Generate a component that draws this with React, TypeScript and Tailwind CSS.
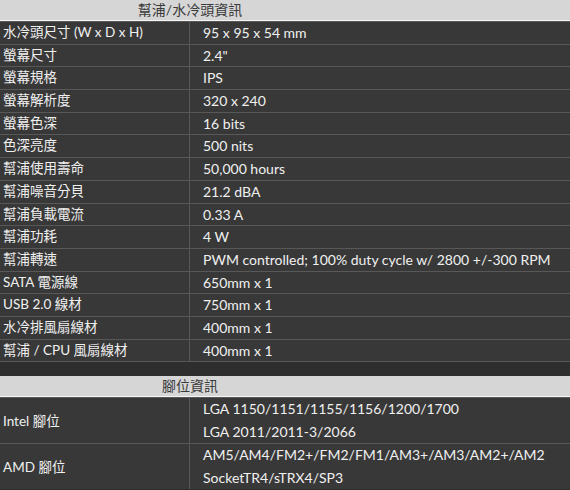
import React from 'react'

const specs: [string, string][] = [
  ['水冷頭尺寸 (W x D x H)', '95 x 95 x 54 mm'],
  ['螢幕尺寸', '2.4"'],
  ['螢幕規格', 'IPS'],
  ['螢幕解析度', '320 x 240'],
  ['螢幕色深', '16 bits'],
  ['色深亮度', '500 nits'],
  ['幫浦使用壽命', '50,000 hours'],
  ['幫浦噪音分貝', '21.2 dBA'],
  ['幫浦負載電流', '0.33 A'],
  ['幫浦功耗', '4 W'],
  ['幫浦轉速', 'PWM controlled; 100% duty cycle w/ 2800 +/-300 RPM'],
  ['SATA 電源線', '650mm x 1'],
  ['USB 2.0 線材', '750mm x 1'],
  ['水冷排風扇線材', '400mm x 1'],
  ['幫浦 / CPU 風扇線材', '400mm x 1'],
]

const sockets: [string, string[]][] = [
  ['Intel 腳位', ['LGA 1150/1151/1155/1156/1200/1700', 'LGA 2011/2011-3/2066']],
  ['AMD 腳位', ['AM5/AM4/FM2+/FM2/FM1/AM3+/AM3/AM2+/AM2', 'SocketTR4/sTRX4/SP3']],
]

function Header({ title }: { title: string }) {
  return (
    <div className="h-[21px] bg-[#d6d6d6] border-b border-[#f4f4f4]">
      <div className="w-[380px] text-center text-[14px] leading-[20px] text-[#3a3a3a]">{title}</div>
    </div>
  )
}

export default function App() {
  return (
    <div
      className="w-[570px] h-[490px] overflow-hidden bg-[#2e2e2e] text-[#f0f0f0] text-[13.5px]"
      style={{ fontFamily: 'Lato, "Noto Sans CJK TC", sans-serif' }}
    >
      <Header title="幫浦/水冷頭資訊" />
      <div className="border-b border-[#585858]">
        {specs.map(([k, v]) => (
          <div key={k} className="grid grid-cols-[190px_1fr] h-[22.7px] border-t border-[#585858] bg-[#383838]">
            <div className="pl-[3px] border-r border-[#585858] leading-[21.7px] whitespace-nowrap">{k}</div>
            <div className="pl-[13px] text-[14px] leading-[21.7px] whitespace-nowrap">{v}</div>
          </div>
        ))}
      </div>
      <div className="h-[14px]" />
      <Header title="腳位資訊" />
      {sockets.map(([k, lines]) => (
        <div key={k} className="grid grid-cols-[190px_1fr] border-t border-[#585858] bg-[#383838]">
          <div className="pl-[3px] border-r border-[#585858] flex items-center whitespace-nowrap">{k}</div>
          <div className="pl-[13px] text-[14px] whitespace-nowrap">
            {lines.map(l => (
              <div key={l} className="leading-[22.5px]">{l}</div>
            ))}
          </div>
        </div>
      ))}
    </div>
  )
}
